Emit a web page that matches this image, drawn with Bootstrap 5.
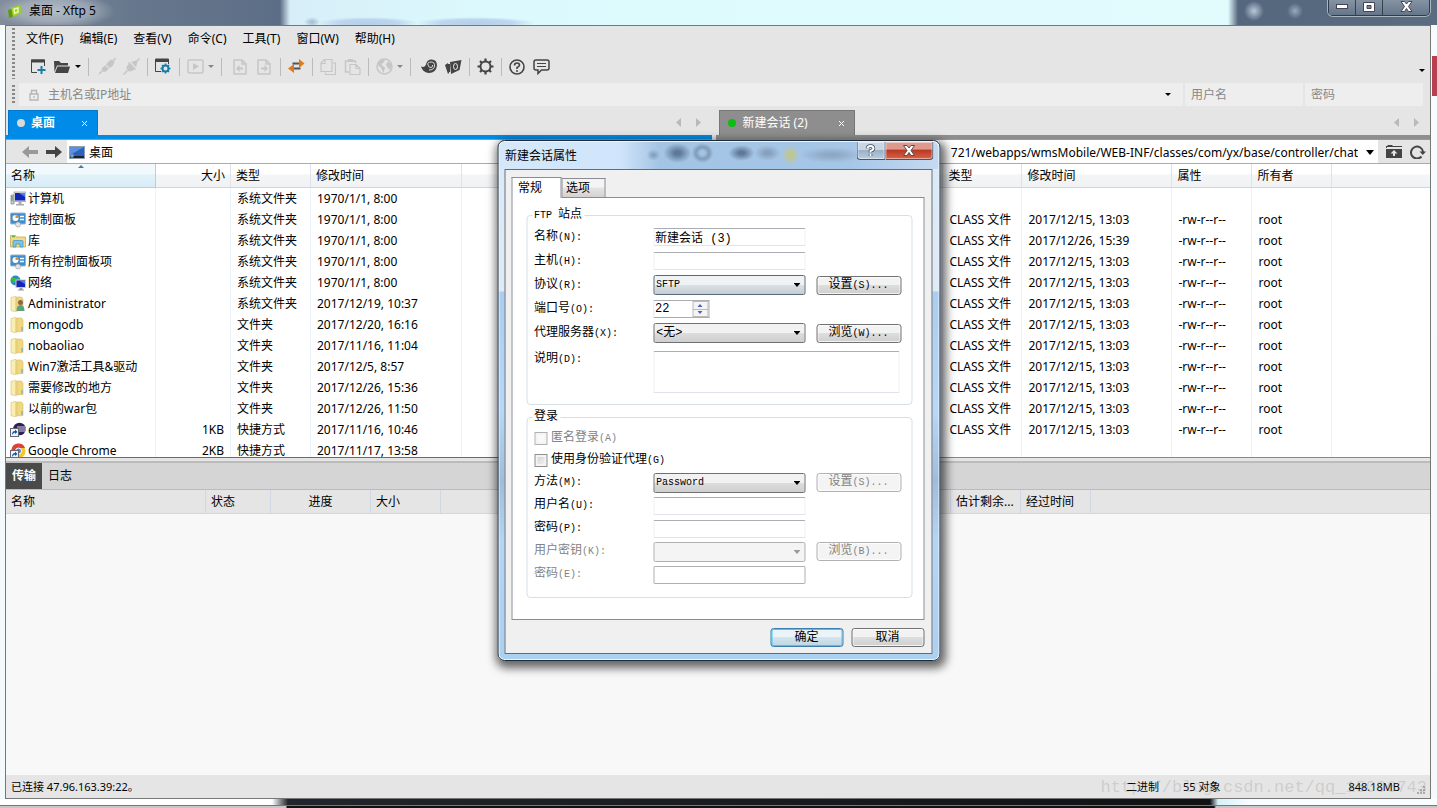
<!DOCTYPE html>
<html lang="zh-CN">
<head>
<meta charset="utf-8">
<meta name="viewport" content="width=device-width, initial-scale=1">
<title>桌面 - Xftp 5</title>
<link href="https://cdn.jsdelivr.net/npm/bootstrap@5.3.0/dist/css/bootstrap.min.css" rel="stylesheet">
<style>
  :root { --ui: "Noto Sans", "Noto Sans CJK SC", sans-serif; --form: "Liberation Mono", "Noto Sans CJK SC", monospace; }
  body { font: 12px/16px var(--ui); color: #000; background: #f4fbfd; min-height: 100vh; overflow: hidden; }
  button, input, select, textarea { font: inherit; color: inherit; }
  svg { display: block; flex: none; }
  a { color: inherit; text-decoration: none; }

  /* window frame */
  .win { height: 100vh; padding: 0 6px 9px 5px;
    background:
      linear-gradient(#b5414e, #b5414e) right 0 top 56px / 5px 40px no-repeat,
      linear-gradient(90deg, #c8c8c8 286px, #111 287px, #111 1214px, #c8c8c8 1216px) bottom / 100% 2px no-repeat,
      linear-gradient(#777, #777) 0 calc(100% - 2px) / 100% 1px no-repeat,
      linear-gradient(90deg, #fff 272px, #20262b 288px, #101214 1210px, #d7f1f8 1218px, #f8fdff 1250px) 0 calc(100% - 3px) / 100% 6px no-repeat,
      linear-gradient(#f7fcfe, #f4f9fb); }
  .title-strip { height: 25px; margin: 0 -6px 0 -5px; padding: 0 0 3px 8px;
    background:
      radial-gradient(circle at 1254px 11px, #b8c8d8 0, transparent 10px),
      radial-gradient(circle at 1295px 11px, #97a9bb 0, transparent 8px),
      radial-gradient(ellipse 60px 18px at 55px 11px, #c2cad4cc 0, #c2cad480 60%, transparent),
      radial-gradient(ellipse 8px 5px at 312px 22px, #9fb9cf 0, transparent),
      radial-gradient(ellipse 50px 6px at 368px 23px, #b4cfea 0, #bdd6ee 60%, transparent),
      radial-gradient(ellipse 60px 6px at 476px 23px, #b4cfea 0, #bdd6ee 60%, transparent),
      linear-gradient(90deg, #828d9c 0, #67788d 130px, #5c6e86 280px, #d7eef8 290px, #dcfafd 500px, #e2fbfd 1228px, #54677e 1238px, #5c6c80 100%); }
  .caption-btns { align-self: flex-start; margin-right: 7px; border: 1px solid #2f3c4b; border-top: 0; border-radius: 0 0 5px 5px; box-shadow: 0 0 0 1px #a9b5c2; }
  .caption-btns button { height: 15px; width: 27px; border: 0; border-right: 1px solid #36434f; background: linear-gradient(#8593a3, #66768a); display: grid; place-items: center; padding: 0 0 2px; }
  .caption-btns button:last-child { width: 46px; border-right: 0; border-radius: 0 0 4px 0; }
  .frame { border: 1px solid #777; background: #e5e5e5; flex: 1; min-height: 0; }

  /* menus and tool bar */
  .grip { width: 3px; align-self: stretch; margin: 2px 0 2px 6px; background: repeating-linear-gradient(#888 0 2px, transparent 2px 4px); }
  .menu-row { height: 26px; }
  .menu-row a { padding: 0 8px; }
  .menu-row nav { padding-left: 3px; }
  .tool-row { height: 31px; padding-bottom: 2px; }
  .tool-row .tools { padding-left: 11px; }
  .tool-row button { width: 24px; height: 24px; padding: 0; border: 0; background: none; color: #444; display: grid; place-items: center; }
  .tool-row button.drop { width: 8px; color: #000; }
  .tool-row button:disabled { color: #c6c6c6; }
  .tool-row button.drop.soft { color: #888; }
  .sepr { width: 8px; display: grid; place-items: center; }
  .sepr::before { content: ""; width: 1px; height: 18px; background: #bbb; }
  .sepr.wide { width: 13px; }
  .addr-row { height: 23px; margin-right: 7px; }
  .addr-field { background: #eee; height: 23px; color: #888; }
  .addr-field input { border: 0; background: none; outline: 0; min-width: 0; padding: 0; }
  .addr-field input::placeholder { color: #888; opacity: 1; }
  .host-field { padding: 0 12px 0 10px; gap: 9px; }
  .narrow-field { width: 118px; padding-left: 6px; margin-left: 2px; }

  /* panes */
  .pane { flex: 99 1 0; min-width: 0; }
  .pane.remote { flex-grow: 100; }
  .tab-line { height: 33px; padding-top: 4px; border-bottom: 4px solid #008be8; }
  .tab-line.other { border-bottom-color: #8e8e8e; }
  .pane-tab { height: 25px; width: 90px; border: 1px solid #0078cc; border-bottom: 0; background: #008be8; color: #fff; padding: 0 9px 0 8px; margin-left: 2px; }
  .other .pane-tab { background: #8e8e8e; border-color: #777; width: 136px; margin-left: 3px; }
  .pane-tab i { width: 8px; height: 8px; border-radius: 50%; background: #d9d9d9; margin-right: 6px; }
  .other .pane-tab i { background: #0cbd12; }
  .pane-tab button, .scrolls button { border: 0; background: none; padding: 0; color: inherit; }
  .scrolls { color: #b9b9b9; padding-right: 11px; gap: 15px; }
  .path-row { height: 25px; border-top: 1px solid #999; border-bottom: 1px solid #aaa; }
  .path-row button { border: 0; background: none; padding: 0; color: #444; }
  .path-row .back { color: #999; }
  .path-row .ahead { padding: 0 5px 0 8px; }
  .path-box { background: #fff; height: 23px; min-width: 0; padding-top: 2px; }
  .path-box.here { padding-left: 2px; gap: 4px; }
  .path-box input { border: 0; outline: 0; padding: 0; min-width: 0; background: none; }
  .list-box { height: 294px; background: #fff; overflow: hidden; border-bottom: 1px solid #1583cf; }
  .other-list { border-bottom-color: #888; }
  .files { table-layout: fixed; width: 100%; border-collapse: separate; border-spacing: 0; white-space: nowrap; }
  .files th { height: 24px; font-weight: 400; padding: 0 5px; border-right: 1px solid #dfe2e6; border-bottom: 1px solid #d2d4d6; background: linear-gradient(#fff 45%, #f4f5f7 46%, #f1f2f4); position: relative; }
  .files th.sorted { background: linear-gradient(#f2f9fc 45%, #e2f2f9 46%, #d8ecf6); border: 1px solid #96d9f9; border-top: 0; border-left: 0; }
  .files th.sorted svg { position: absolute; left: 50%; top: 1px; margin-left: -3px; }
  .files td { height: 21px; padding: 0 6px; border-right: 1px solid #e9f1fb; overflow: hidden; }
  .files td:first-child { padding-left: 4px; }
  .files th:last-child, .files td:last-child { border-right: 0; }
  .files .num { text-align: right; }
  .entry { display: flex; align-items: center; gap: 2px; }

  /* transfer area */
  .log-tabs { height: 29px; background: #d5d5d5; border-top: 2px solid #bbb; border-bottom: 1px solid #bbb; margin-top: 3px; }
  .log-tabs button { border: 0; height: 26px; padding: 0 6px; background: none; }
  .log-tabs button.on { background: #4a4a4a; color: #fff; font-weight: 700; }
  .queue { table-layout: fixed; width: 100%; border-collapse: separate; border-spacing: 0; white-space: nowrap; }
  .queue th { height: 24px; font-weight: 400; padding: 0 5px; border-right: 1px solid #cfd9e6; border-bottom: 1px solid #cfd9e6; background: #e5e5e5; overflow: hidden; }
  .queue th:last-child { border-right: 0; }
  .log-area { background: #f8f8f8; flex: 1; min-height: 0; }
  .status-row { height: 23px; padding: 0 5px; font-size: 11px; }
  .status-row .count { margin-right: 128px; }
  .watermark { position: absolute; right: 10px; bottom: 8px; font: 17px/24px "Liberation Mono", monospace; color: #8884; pointer-events: none; white-space: nowrap; }

  /* dialog */
  .dlg { position: absolute; left: 50%; top: 140px; transform: translateX(-50%); width: 443px; border: 1px solid #1d2a38; border-radius: 7px; padding: 0 7px 6px 6px; font-family: var(--form);
    background: linear-gradient(#dbe9f7 0, #dfeaf5 150px, #aacdf0 151px, #b7d8f8 270px, #a0bcdc 340px, #b5d5f5 400px, #acd0f0); box-shadow: inset 0 0 0 1px #e8f4ff, 2px 4px 10px 3px #0009; }
  .dlg-head { height: 27px; font: 12px/16px var(--ui);
    margin: 1px -6px 0 -5px; padding-left: 6px;
    background:
      radial-gradient(ellipse 7px 6px at 154px 13px, #7f9ab8, transparent),
      radial-gradient(ellipse 14px 10px at 178px 11px, #5e7898 20%, transparent),
      radial-gradient(ellipse 11px 10px at 203px 11px, #a4c4e4 20%, #7f9bb9 60%, transparent),
      radial-gradient(ellipse 13px 8px at 242px 11px, #5e7898 20%, transparent),
      radial-gradient(ellipse 13px 8px at 268px 11px, #86a0bd 20%, transparent),
      radial-gradient(ellipse 9px 10px at 291px 13px, #bec78e 20%, transparent),
      radial-gradient(ellipse 32px 8px at 332px 13px, #8fa8c4 20%, transparent),
      linear-gradient(90deg, #d5e8fb, #d0e5fb 120px, #a4c4e4 160px, #a6c6e8 350px, #c5daf0);
    border-radius: 6px 6px 0 0; }
  .dlg-caps { align-self: flex-start; margin-right: 5px; }
  .dlg-caps button { height: 18px; border: 1px solid #46566a; border-top: 0; padding: 0; display: grid; place-items: center; box-shadow: inset 0 0 0 1px #fff7; }
  .dlg-caps .q { width: 29px; border-radius: 0 0 0 4px; background: linear-gradient(#c9d6e4 45%, #9cb1c8 50%, #b9cde0); }
  .dlg-caps .x { width: 48px; border-left: 0; border-radius: 0 0 4px 0; background: linear-gradient(#dc9a8e 40%, #bd3a22 50%, #d5634b); }
  .dlg-body { border: 1px solid #5e6e80; background: #f0f0f0; padding: 6px 7px 6px 6px; }
  .dlg-tabs { height: 21px; align-items: flex-end; font: 12px/16px var(--ui); }
  .dlg-tabs button { border: 1px solid #898c95; border-bottom: 0; padding: 0 14px 0 4px; height: 19px; background: linear-gradient(#f4f4f4 45%, #e4e4e4 50%, #d2d2d2); }
  .dlg-tabs button.on { height: 21px; padding: 0 18px 1px 6px; background: #fff; margin-bottom: -1px; position: relative; }
  .dlg-page { border: 1px solid #898c95; background: #fff; padding: 17px 11px 21px 14px; }
  .grp { position: relative; border: 1px solid #d5dfe5; border-radius: 4px; padding: 9px 10px 11px 7px; }
  .grp + .grp { margin-top: 12px; }
  .grp legend { position: absolute; top: -9px; left: 5px; width: auto; float: none; margin: 0; padding: 0 2px; font-size: 12px; line-height: 16px; background: #fff; }
  .lat { font-size: 10px; }
  .line { display: grid; grid-template-columns: 119px 152px 85px; height: 24px; align-items: center; }
  .line .push { margin-left: 11px; width: 85px; }
  .line.tight { height: 23px; }
  .line.tall { height: auto; align-items: start; padding-top: 6px; }
  .line.tick { display: flex; height: 22px; gap: 4px; }
  .line.tick input { appearance: none; width: 13px; height: 13px; margin: 0; border: 1px solid #8e8f8f; background: linear-gradient(135deg, #cbcfd5, #f6f6f6); box-shadow: inset 0 0 0 2px #f4f4f4; }
  .line.tick input:disabled { border-color: #b1b1b1; background: #f9f9f9; }
  .off { color: #838383; }
  .txt { height: 18px; width: 152px; padding: 0 1px; border: 1px solid #e2e3ea; border-top-color: #abadb3; border-radius: 1px; background: #fff; font-size: 12px; line-height: 16px; outline: 0; }
  .txt:disabled { border-color: #afafaf; }
  .pick { appearance: none; height: 20px; width: 152px; border: 1px solid #707070; border-radius: 2px; padding: 0 18px 0 2px; font-size: 10px; line-height: 16px; 
    background: url("data:image/svg+xml,%3Csvg xmlns='http://www.w3.org/2000/svg' width='7' height='4'%3E%3Cpath d='M0 0h7L3.5 4z'/%3E%3C/svg%3E") right 4px center no-repeat, linear-gradient(#f2f2f2 50%, #dddddd 51%, #cfcfcf); }
  .pick.cool { background: url("data:image/svg+xml,%3Csvg xmlns='http://www.w3.org/2000/svg' width='7' height='4'%3E%3Cpath d='M0 0h7L3.5 4z'/%3E%3C/svg%3E") right 4px center no-repeat, linear-gradient(#eff3f5 50%, #dbe2e6 51%, #c5cdd2); border-color: #5a6a7a; }
  .pick:disabled { opacity: 1; border-color: #b1b1b1; background: url("data:image/svg+xml,%3Csvg xmlns='http://www.w3.org/2000/svg' width='7' height='4'%3E%3Cpath fill='%23999' d='M0 0h7L3.5 4z'/%3E%3C/svg%3E") right 4px center no-repeat, #f4f4f4; }
  .pick.cjk { font-size: 12px; }
  .push { height: 19px; border: 1px solid #707070; border-radius: 3px; padding: 0; font-size: 12px; line-height: 16px; background: linear-gradient(#f2f2f2 48%, #dddddd 50%, #cfcfcf); box-shadow: inset 0 0 0 1px #fffb; }
  .push:disabled { color: #838383; border-color: #b1b1b1; background: #f4f4f4; }
  .push.w { width: 73px; }
  .push.main { border-color: #3c7fb1; box-shadow: inset 0 0 0 1px #3ccdf5; background: linear-gradient(#eaf3f8 48%, #d3e5ee 50%, #bfd6e2); }
  .spin { width: 56px; height: 18px; border: 1px solid #abadb3; border-left-color: #e2e3ea; display: flex; }
  .spin input { width: 38px; border: 0; outline: 0; padding: 0 1px; }
  .spin div { flex: 1; display: grid; gap: 1px; padding: 1px; background: #bbb; }
  .spin button { all: unset; background: #f4f4f4; display: grid; place-items: center; }
  .memo { height: 42px; width: 246px; resize: none; }
</style>
</head>
<body>
<svg width="0" height="0" class="position-absolute" aria-hidden="true">
  <symbol id="caret" viewBox="0 0 6 3"><path d="M0 0h6L3 3z" fill="currentColor"/></symbol>
  <symbol id="tri-l" viewBox="0 0 5 9"><path d="M5 0v9L0 4.500z" fill="currentColor"/></symbol>
  <symbol id="tri-r" viewBox="0 0 5 9"><path d="M0 0v9l5-4.500z" fill="currentColor"/></symbol>
  <symbol id="arrow-r" viewBox="0 0 16 12"><path d="M0 4h9V0l7 6-7 6V8H0z" fill="currentColor"/></symbol>
  <symbol id="arrow-l" viewBox="0 0 16 12"><path d="M16 4H7V0L0 6l7 6V8h9z" fill="currentColor"/></symbol>
  <symbol id="f-pc" viewBox="0 0 16 16"><path d="M1 4h3v9H1z" fill="#c9ccd0" stroke="#777" stroke-width=".6"/><path d="M2 5v5" stroke="#2b9a4a"/><rect x="4" y="1" width="12" height="9.500" fill="#e4e4e4" stroke="#888" stroke-width=".6"/><rect x="5" y="2" width="10" height="7.500" fill="#1425b8"/><path d="M9 2h6v4z" fill="#4b7cf0"/><path d="M8.500 10.500h3V13h2.500v1.500H6V13h2.500z" fill="#aaa"/></symbol>
  <symbol id="f-ctl" viewBox="0 0 16 16"><rect x=".5" y="1" width="15" height="11" rx="1" fill="#3e8ed0" stroke="#9cb3c8"/><circle cx="5.500" cy="6" r="3" fill="#fff"/><path d="M5.500 6V3a3 3 0 0 1 3 3z" fill="#f08a1c"/><path d="M10 4.500h4M10 7.500h4" stroke="#fff" stroke-width="1.300"/><circle cx="8" cy="12.500" r="2.500" fill="#e4e4e4" stroke="#999" stroke-width=".6"/></symbol>
  <symbol id="f-lib" viewBox="0 0 16 16"><path d="M.5 2.500h5l1 1.500h9v10H.5z" fill="#f3da85" stroke="#c9a94b" stroke-width=".8"/><path d="M2 3.500h3" stroke="#5cb531" stroke-width="1.500"/><path d="M3 14V8.500q0-1 1-1h8q1 0 1 1V14h-3v-3H6v3z" fill="#7cc4ec" stroke="#3b93c7" stroke-width=".7"/></symbol>
  <symbol id="f-net" viewBox="0 0 16 16"><circle cx="5.500" cy="5.500" r="5" fill="#2089d0"/><path d="M2 2q3 0 4 2T3 8Q1 6 1 4zM7 1l3 3-2 1z" fill="#3dbb3a"/><rect x="6" y="5" width="9.500" height="7.500" fill="#1425b8" stroke="#ccc"/><path d="M10 6h5v3z" fill="#4b7cf0"/><path d="M9.500 13h3v1.500h1.500v1H8v-1h1.500z" fill="#999"/></symbol>
  <symbol id="f-dir" viewBox="0 0 16 16"><path d="M5 1h6.500l1.500 2v11.500L5 15z" fill="#f0d87e" stroke="#d4b96a" stroke-width=".6"/><path d="M1 1.500 5.500.5 7 2v12.500L5.500 16 1 14.500z" fill="#faeeb0" stroke="#d8bd6a" stroke-width=".6"/><path d="M6 1.500v13.500" stroke="#dcbf62"/><path d="M12 10v4" stroke="#58a9dd"/></symbol>
  <symbol id="f-user" viewBox="0 0 16 16"><use href="#f-dir"/><circle cx="10.500" cy="6.500" r="2.500" fill="#8a6848"/><path d="M6.500 15q0-6 4-6t4 6z" fill="#5da27b"/></symbol>
  <symbol id="f-ecl" viewBox="0 0 16 16"><circle cx="9.500" cy="7" r="6.300" fill="#2c2255"/><path d="M7 5h8.500M7 7h9M7 9h8.500" stroke="#dcd6ec"/><rect x=".5" y="6.500" width="8" height="8" fill="#eef4fb" stroke="#667"/><path d="M2 13q0-4 3-4V7.500L7.500 10 5 12v-1.500Q3.500 10.500 2 13z" fill="#1454a8"/></symbol>
  <symbol id="f-chr" viewBox="0 0 16 16"><circle cx="8.500" cy="8" r="7" fill="#f6c42d"/><path d="M1.500 7A7 7 0 0 1 15 5H8L5 9z" fill="#dd4335"/><path d="M2 5.500 6 11l-1 4Q0 12 2 5.500z" fill="#2ba24c"/><circle cx="8.500" cy="8" r="3" fill="#4285f4" stroke="#fff"/><rect x=".5" y="7.500" width="8" height="8" fill="#eef4fb" stroke="#667"/><path d="M2 14q0-4 3-4V8.500L7.500 11 5 13v-1.500Q3.500 11.500 2 14z" fill="#1454a8"/></symbol>
</svg>

<div class="win d-flex flex-column position-relative">
  <header class="title-strip d-flex align-items-center">
    <svg width="13" height="13" viewBox="0 0 13 13"><path d="M0 5l6-2 1 8-6 2z" fill="#5f9a10"/><path d="M3 2.500 12.500 0 13 8l-8 4z" fill="#9ed022"/><path d="M6 4l4-1v4l-3.500 1.500z" fill="none" stroke="#e9f7b8" stroke-width="1.500"/></svg>
    <span class="ps-1 ms-1">桌面 - Xftp 5</span>
    <div class="caption-btns d-flex ms-auto">
      <button aria-label="最小化"><svg width="12" height="5" viewBox="0 0 12 5"><rect x=".5" y=".5" width="11" height="4" fill="#fff" stroke="#445"/></svg></button>
      <button aria-label="最大化"><svg width="12" height="10" viewBox="0 0 12 10"><path fill-rule="evenodd" d="M.5.5h11v9H.5zM4 3.500v3h4v-3z" fill="#fff" stroke="#445"/></svg></button>
      <button aria-label="关闭"><svg width="13" height="11" viewBox="0 0 13 11"><path d="M1 .5h3.500l2 2.500 2-2.500H12L8.500 5.500l3.500 5H8.500l-2-3-2 3H1l3.500-5z" fill="#fff" stroke="#445"/></svg></button>
    </div>
  </header>

  <div class="frame d-flex flex-column">
    <div class="menu-row d-flex align-items-center">
      <span class="grip"></span>
      <nav class="d-flex"><a href="#">文件(F)</a><a href="#">编辑(E)</a><a href="#">查看(V)</a><a href="#">命令(C)</a><a href="#">工具(T)</a><a href="#">窗口(W)</a><a href="#">帮助(H)</a></nav>
    </div>

    <div class="tool-row d-flex align-items-center">
      <span class="grip"></span>
      <div class="tools d-flex align-items-center">
        <button aria-label="新建会话"><svg width="18" height="16" viewBox="0 0 18 16"><path d="M8 13.500H2.500V1h13v6" fill="none" stroke="currentColor"/><path d="M2 .5h14v3H2z" fill="currentColor"/><path d="M12.500 7v8M8.500 11h8" stroke="#1b7da8" stroke-width="2"/></svg></button>
        <button aria-label="打开"><svg width="18" height="14" viewBox="0 0 18 14"><path d="M1 1h5l2 2h7v2.500H4L1.500 12z" fill="currentColor"/><path d="M4.500 6.500H17L15 13H2z" fill="currentColor"/></svg></button>
        <button class="drop" aria-label="会话列表"><svg width="6" height="3"><use href="#caret"/></svg></button>
        <span class="sepr wide"></span>
        <button disabled aria-label="断开"><svg width="17" height="17" viewBox="0 0 17 17"><g fill="currentColor"><path d="M10 3l3-1.500 2.500 2.500L14 7.500l-2.500 2L7.500 6z"/><path d="M6 7.500 9.500 11 7 13.500l-2.500.5L2.500 12 3 10z"/></g><path d="M14 3l3-3M3 13l-3 3M7 8l2-2M9 10l2-2" stroke="currentColor" stroke-width="1.500"/></svg></button>
        <button disabled aria-label="重新连接"><svg width="17" height="17" viewBox="0 0 17 17"><path d="M6 5.500 11.500 11 9 13l-3 .500L3.500 11 4 8z" fill="currentColor"/><path d="M8 4l5-1.500L14.500 4 13 9z" fill="currentColor"/><path d="M13 4l3.500-3.500M4.500 12.500.5 16.500M5.500 4.500l7 7" stroke="currentColor" stroke-width="1.500"/></svg></button>
        <span class="sepr"></span>
        <button aria-label="会话属性"><svg width="18" height="17" viewBox="0 0 18 17"><path d="M7 13.500H1.500V1h13v5" fill="none" stroke="currentColor"/><path d="M1 1h14v3H1z" fill="currentColor"/><circle cx="11.500" cy="10.500" r="3" fill="none" stroke="#1b7da8" stroke-width="2"/><path d="M11.500 5.500v2M11.500 13.500v2M6.500 10.500h2M14.500 10.500h2M8 7l1.500 1.500M13.500 12.500 15 14M15 7l-1.500 1.500M9.500 12.500 8 14" stroke="#1b7da8" stroke-width="1.600"/></svg></button>
        <span class="sepr"></span>
        <button disabled aria-label="执行"><svg width="17" height="15" viewBox="0 0 17 15"><rect x="1" y="1" width="15" height="13" rx="1.500" fill="none" stroke="currentColor" stroke-width="1.500"/><path d="M6 4l6 3.500L6 11z" fill="currentColor"/></svg></button>
        <button class="drop soft" aria-label="执行选项"><svg width="6" height="3"><use href="#caret"/></svg></button>
        <span class="sepr wide"></span>
        <button disabled aria-label="下载"><svg width="14" height="16" viewBox="0 0 14 16"><path d="M1 1h8l4 4v10H1zM9 1v4h4" fill="none" stroke="currentColor" stroke-width="1.500"/><path d="M3 9.500 6.500 6v2.500H10v2H6.500V13z" fill="currentColor"/></svg></button>
        <button disabled aria-label="上传"><svg width="14" height="16" viewBox="0 0 14 16"><path d="M1 1h8l4 4v10H1zM9 1v4h4" fill="none" stroke="currentColor" stroke-width="1.500"/><path d="M11 9.500 7.500 6v2.500H4v2h3.500V13z" fill="currentColor"/></svg></button>
        <span class="sepr"></span>
        <button aria-label="同步浏览"><svg width="17" height="15" viewBox="0 0 17 15"><path d="M11 0l5.500 4.500L11 9zM6 5v9L0 9.500z" fill="#e07b1c"/><path d="M4.500 4.500H11M6 9.500h6.500" stroke="#555" stroke-width="2"/></svg></button>
        <span class="sepr"></span>
        <button disabled aria-label="复制"><svg width="16" height="16" viewBox="0 0 16 16"><path d="M5.500 13.500v2h10V4H13M1 4l3.500-3.500H12v12H1zM1 4.500h4V1" fill="none" stroke="currentColor" stroke-width="1.200"/></svg></button>
        <button disabled aria-label="粘贴"><svg width="17" height="16" viewBox="0 0 17 16"><path d="M5 13H1.500V2h10v2" fill="none" stroke="currentColor" stroke-width="1.500"/><path d="M4 0h5v3H4z" fill="currentColor"/><path d="M6 5.500h6l4 4v6H6zM12 5.500v4h4" fill="none" stroke="currentColor" stroke-width="1.200"/></svg></button>
        <span class="sepr"></span>
        <button disabled aria-label="编码"><svg width="17" height="17" viewBox="0 0 17 17"><circle cx="8.500" cy="8.500" r="7.500" fill="none" stroke="currentColor" stroke-width="1.500"/><path d="M2 5q3-4 7-3.500L8 4 5.500 6l1 2L9 9.500 7.500 15 6 12 5 9.500 2.500 8zM12 3.500l3.500 3L14 12l-2.500-2.500L10 6.500z" fill="currentColor"/></svg></button>
        <button class="drop soft" aria-label="编码列表"><svg width="6" height="3"><use href="#caret"/></svg></button>
        <span class="sepr wide"></span>
        <button aria-label="Xshell"><svg width="17" height="15" viewBox="0 0 17 15"><path d="M0 7.500q4 1.500 5-2Q6 .5 10.500.5 16 .5 16 6.500 15 14 8 14 2 14 0 7.500z" fill="currentColor"/><path d="M8 11q5 0 5.500-4T10 3 7 6t3 2.500T11.500 6" fill="none" stroke="#ddd"/></svg></button>
        <button aria-label="Xftp"><svg width="17" height="16" viewBox="0 0 17 16"><path d="M5 3l11.500-2-2 10L6 15zM0 6l3-2 1 10-1 1z" fill="currentColor"/><path d="M4 5v8" stroke="currentColor" stroke-width="2"/><ellipse cx="10.500" cy="7.500" rx="2" ry="3" fill="#444" stroke="#eee"/></svg></button>
        <span class="sepr"></span>
        <button aria-label="选项"><svg width="17" height="17" viewBox="0 0 17 17"><circle cx="8.500" cy="8.500" r="5" fill="none" stroke="currentColor" stroke-width="2"/><path d="M8.500.5v3M8.500 13.500v3M.5 8.500h3M13.500 8.500h3M3 3l2 2M12 12l2 2M14 3l-2 2M5 12l-2 2" stroke="currentColor" stroke-width="2.200"/></svg></button>
        <span class="sepr"></span>
        <button aria-label="帮助"><svg width="16" height="16" viewBox="0 0 16 16"><circle cx="8" cy="8" r="7" fill="none" stroke="currentColor" stroke-width="1.600"/><path d="M5.500 6.500Q5.500 4 8 4t2.500 2.300Q10.500 7.500 8 8.500V10" fill="none" stroke="currentColor" stroke-width="1.600"/><circle cx="8" cy="12" r="1" fill="currentColor"/></svg></button>
        <button aria-label="反馈"><svg width="17" height="16" viewBox="0 0 17 16"><path d="M3 1h11q2 0 2 2v6q0 2-2 2H8.500L5 14.500V11H3Q1 11 1 9V3q0-2 2-2z" fill="none" stroke="currentColor" stroke-width="1.500"/><path d="M4 4.500h9M4 7.500h9" stroke="currentColor" stroke-width="1.200"/></svg></button>
      </div>
      <button class="drop ms-auto me-1 pt-2" aria-label="工具栏选项"><svg width="6" height="3"><use href="#caret"/></svg></button>
    </div>

    <div class="addr-row d-flex align-items-center">
      <span class="grip"></span>
      <div class="addr-field host-field flex-grow-1 d-flex align-items-center ms-1">
        <svg width="10" height="12" viewBox="0 0 10 12"><path d="M1 5h8v6H1zM2.500 5V1.500h5V5M5 7v2" fill="none" stroke="#b5b5b5" stroke-width="1.300"/></svg>
        <input class="flex-grow-1" type="text" placeholder="主机名或IP地址" aria-label="主机名或IP地址">
        <svg width="6" height="3" class="text-black"><use href="#caret"/></svg>
      </div>
      <div class="addr-field narrow-field d-flex"><input class="w-100" type="text" placeholder="用户名" aria-label="用户名"></div>
      <div class="addr-field narrow-field d-flex"><input class="w-100" type="password" placeholder="密码" aria-label="密码"></div>
    </div>

    <main class="d-flex gap-1">
      <section class="pane">
        <div class="tab-line d-flex justify-content-between">
          <div class="pane-tab d-flex align-items-center fw-bold"><i></i>桌面<button class="ms-auto" aria-label="关闭标签"><svg width="7" height="7" viewBox="0 0 7 7"><path d="M1 1l5 5M6 1 1 6" stroke="#fff"/></svg></button></div>
          <div class="scrolls d-flex"><button aria-label="向左"><svg width="5" height="9"><use href="#tri-l"/></svg></button><button aria-label="向右"><svg width="5" height="9"><use href="#tri-r"/></svg></button></div>
        </div>
        <div class="path-row d-flex align-items-center">
          <button class="back ps-3" aria-label="后退"><svg width="16" height="12"><use href="#arrow-l"/></svg></button>
          <button class="ahead" aria-label="前进"><svg width="16" height="12"><use href="#arrow-r"/></svg></button>
          <div class="path-box here flex-grow-1 d-flex align-items-center">
            <svg width="16" height="13" viewBox="0 0 16 13"><rect x=".5" y=".5" width="15" height="12" fill="#2b62c0" stroke="#8d9cb0"/><path d="M1 1h14L1 9z" fill="#5a90e0"/><path d="M1 10h14v2H1z" fill="#222"/><path d="M1.500 8.500h3v3h-3z" fill="#58b0e8"/><path d="M3 8.500h1.500V10H3z" fill="#e58b2c"/></svg>
            <input class="flex-grow-1" type="text" value="桌面" aria-label="本地路径">
          </div>
        </div>
        <div class="list-box">
          <table class="files">
            <colgroup><col style="width:150px"><col style="width:75px"><col style="width:80px"><col style="width:151px"><col></colgroup>
            <thead><tr><th class="sorted">名称<svg width="6" height="3" viewBox="0 0 6 3"><path d="M0 3h6L3 0z" fill="#4c7a95"/></svg></th><th class="num">大小</th><th>类型</th><th>修改时间</th><th></th></tr></thead>
            <tbody id="localRows"></tbody>
          </table>
        </div>
      </section>

      <section class="pane remote">
        <div class="tab-line other d-flex justify-content-between">
          <div class="pane-tab d-flex align-items-center"><i></i>新建会话 (2)<button class="ms-auto" aria-label="关闭标签"><svg width="7" height="7" viewBox="0 0 7 7"><path d="M1 1l5 5M6 1 1 6" stroke="#fff"/></svg></button></div>
          <div class="scrolls d-flex"><button aria-label="向左"><svg width="5" height="9"><use href="#tri-l"/></svg></button><button aria-label="向右"><svg width="5" height="9"><use href="#tri-r"/></svg></button></div>
        </div>
        <div class="path-row d-flex align-items-center">
          <div class="path-box flex-grow-1 d-flex align-items-center">
            <input class="flex-grow-1 text-end me-2" type="text" value="721/webapps/wmsMobile/WEB-INF/classes/com/yx/base/controller/chat" aria-label="远程路径">
            <svg width="8" height="5" viewBox="0 0 8 5" class="me-1"><path d="M0 0h8L4 5z"/></svg>
          </div>
          <button class="px-2" aria-label="上级目录"><svg width="16" height="13" viewBox="0 0 16 13"><path d="M0 3V1h1l1-1h4l1 1h9v1H1v1zM0 4h16v9H0z" fill="currentColor"/><path d="M8 5l3.500 3.500H9V11H7V8.500H4.500z" fill="#e5e5e5"/></svg></button>
          <button class="pe-1" aria-label="刷新"><svg width="16" height="14" viewBox="0 0 16 14"><path d="M11.500 11.500A6 6 0 1 1 13 7" fill="none" stroke="currentColor" stroke-width="2"/><path d="M9.500 6.500H16L12.800 10z" fill="currentColor"/></svg></button>
        </div>
        <div class="list-box other-list">
          <table class="files">
            <colgroup><col style="width:152px"><col style="width:75px"><col style="width:79px"><col style="width:150px"><col style="width:80px"><col style="width:80px"><col></colgroup>
            <thead><tr><th></th><th></th><th>类型</th><th>修改时间</th><th>属性</th><th>所有者</th><th></th></tr></thead>
            <tbody id="remoteRows"></tbody>
          </table>
        </div>
      </section>
    </main>

    <div class="log-tabs d-flex"><button class="on">传输</button><button>日志</button></div>
    <section class="log-area">
      <table class="queue">
        <colgroup><col style="width:200px"><col style="width:65px"><col style="width:100px"><col style="width:70px"><col style="width:510px"><col style="width:70px"><col style="width:70px"><col></colgroup>
        <thead><tr><th>名称</th><th>状态</th><th class="text-center">进度</th><th>大小</th><th></th><th>估计剩余...</th><th>经过时间</th><th></th></tr></thead>
      </table>
    </section>
    <footer class="status-row d-flex align-items-center">
      <span class="me-auto">已连接 47.96.163.39:22。</span>
      <span class="me-4">二进制</span><span class="count">55 对象</span><span class="me-3">848.18MB</span>
      <svg width="9" height="9" viewBox="0 0 9 9" fill="#aaa" class="mt-2"><path d="M7 0h2v2H7zM4 3h2v2H4zM7 3h2v2H7zM1 6h2v2H1zM4 6h2v2H4zM7 6h2v2H7z"/></svg>
    </footer>
  </div>
  <div class="watermark">http://blog.csdn.net/qq_15096743</div>

  <form class="dlg" role="dialog" aria-label="新建会话属性">
    <div class="dlg-head d-flex align-items-center">
      <span>新建会话属性</span>
      <div class="dlg-caps d-flex ms-auto">
        <button type="button" class="q" aria-label="帮助"><svg width="10" height="13" viewBox="0 0 10 13"><path d="M2 4.500Q2 2 5 2t3 2.500Q8 6 5 7v1.500M5 10v2" fill="none" stroke="#3a475a" stroke-width="3.600"/><path d="M2 4.500Q2 2 5 2t3 2.500Q8 6 5 7v1.500M5 10v2" fill="none" stroke="#fff" stroke-width="2"/></svg></button>
        <button type="button" class="x" aria-label="关闭"><svg width="13" height="11" viewBox="0 0 13 11"><path d="M1 .5h3.500l2 2.500 2-2.500H12L8.500 5.500l3.500 5H8.500l-2-3-2 3H1l3.500-5z" fill="#fff" stroke="#534a55"/></svg></button>
      </div>
    </div>
    <div class="dlg-body">
      <div class="dlg-tabs d-flex"><button type="button" class="on">常规</button><button type="button">选项</button></div>
      <div class="dlg-page">
        <fieldset class="grp">
          <legend><span class="lat">FTP </span>站点</legend>
          <div class="line"><label for="n">名称<span class="lat">(N):</span></label><input id="n" class="txt" type="text" value="新建会话 (3)"></div>
          <div class="line"><label for="h">主机<span class="lat">(H):</span></label><input id="h" class="txt" type="text"></div>
          <div class="line"><label for="p">协议<span class="lat">(R):</span></label><select id="p" class="pick cool"><option>SFTP</option></select><button type="button" class="push">设置<span class="lat">(S)...</span></button></div>
          <div class="line"><label for="o">端口号<span class="lat">(O):</span></label><div class="spin"><input id="o" type="text" value="22"><div><button type="button" aria-label="增加"><svg width="5" height="3" viewBox="0 0 5 3"><path d="M0 3h5L2.500 0z" fill="#4a62b5"/></svg></button><button type="button" aria-label="减少"><svg width="5" height="3" viewBox="0 0 5 3"><path d="M0 0h5L2.500 3z" fill="#4a62b5"/></svg></button></div></div></div>
          <div class="line"><label for="x">代理服务器<span class="lat">(X):</span></label><select id="x" class="pick cjk"><option>&lt;无&gt;</option></select><button type="button" class="push">浏览<span class="lat">(W)...</span></button></div>
          <div class="line tall"><label for="d">说明<span class="lat">(D):</span></label><textarea id="d" class="txt memo"></textarea></div>
        </fieldset>
        <fieldset class="grp">
          <legend>登录</legend>
          <div class="line tick off"><input id="a" type="checkbox" disabled><label for="a">匿名登录<span class="lat">(A)</span></label></div>
          <div class="line tick"><input id="g" type="checkbox"><label for="g">使用身份验证代理<span class="lat">(G)</span></label></div>
          <div class="line tight"><label for="m">方法<span class="lat">(M):</span></label><select id="m" class="pick"><option>Password</option></select><button type="button" class="push" disabled>设置<span class="lat">(S)...</span></button></div>
          <div class="line tight"><label for="u">用户名<span class="lat">(U):</span></label><input id="u" class="txt" type="text"></div>
          <div class="line tight"><label for="w">密码<span class="lat">(P):</span></label><input id="w" class="txt" type="password"></div>
          <div class="line tight"><label for="k" class="off">用户密钥<span class="lat">(K):</span></label><select id="k" class="pick" disabled></select><button type="button" class="push" disabled>浏览<span class="lat">(B)...</span></button></div>
          <div class="line tight"><label for="e" class="off">密码<span class="lat">(E):</span></label><input id="e" class="txt" type="password" disabled></div>
        </fieldset>
      </div>
      <div class="d-flex justify-content-end gap-2 pt-2"><button type="button" class="push w main">确定</button><button type="button" class="push w">取消</button></div>
    </div>
  </form>
</div>

<script src="https://cdn.jsdelivr.net/npm/bootstrap@5.3.0/dist/js/bootstrap.bundle.min.js"></script>
<script>
  const local = [
    ["f-pc", "计算机", "", "系统文件夹", "1970/1/1, 8:00"],
    ["f-ctl", "控制面板", "", "系统文件夹", "1970/1/1, 8:00"],
    ["f-lib", "库", "", "系统文件夹", "1970/1/1, 8:00"],
    ["f-ctl", "所有控制面板项", "", "系统文件夹", "1970/1/1, 8:00"],
    ["f-net", "网络", "", "系统文件夹", "1970/1/1, 8:00"],
    ["f-user", "Administrator", "", "系统文件夹", "2017/12/19, 10:37"],
    ["f-dir", "mongodb", "", "文件夹", "2017/12/20, 16:16"],
    ["f-dir", "nobaoliao", "", "文件夹", "2017/11/16, 11:04"],
    ["f-dir", "Win7激活工具&amp;驱动", "", "文件夹", "2017/12/5, 8:57"],
    ["f-dir", "需要修改的地方", "", "文件夹", "2017/12/26, 15:36"],
    ["f-dir", "以前的war包", "", "文件夹", "2017/12/26, 11:50"],
    ["f-ecl", "eclipse", "1KB", "快捷方式", "2017/11/16, 10:46"],
    ["f-chr", "Google Chrome", "2KB", "快捷方式", "2017/11/17, 13:58"]
  ];
  localRows.innerHTML = local.map(([icon, name, size, type, time]) =>
    `<tr><td><span class="entry"><svg width="16" height="16"><use href="#${icon}"/></svg>${name}</span></td><td class="num">${size}</td><td>${type}</td><td>${time}</td><td></td></tr>`
  ).join("");

  const blank = "<tr>" + "<td></td>".repeat(7) + "</tr>";
  const times = Array(11).fill("2017/12/15, 13:03");
  times[1] = "2017/12/26, 15:39";
  remoteRows.innerHTML = blank + times.map(t =>
    `<tr><td></td><td></td><td>CLASS 文件</td><td>${t}</td><td>-rw-r--r--</td><td>root</td><td></td></tr>`
  ).join("") + blank;
</script>
</body>
</html>
